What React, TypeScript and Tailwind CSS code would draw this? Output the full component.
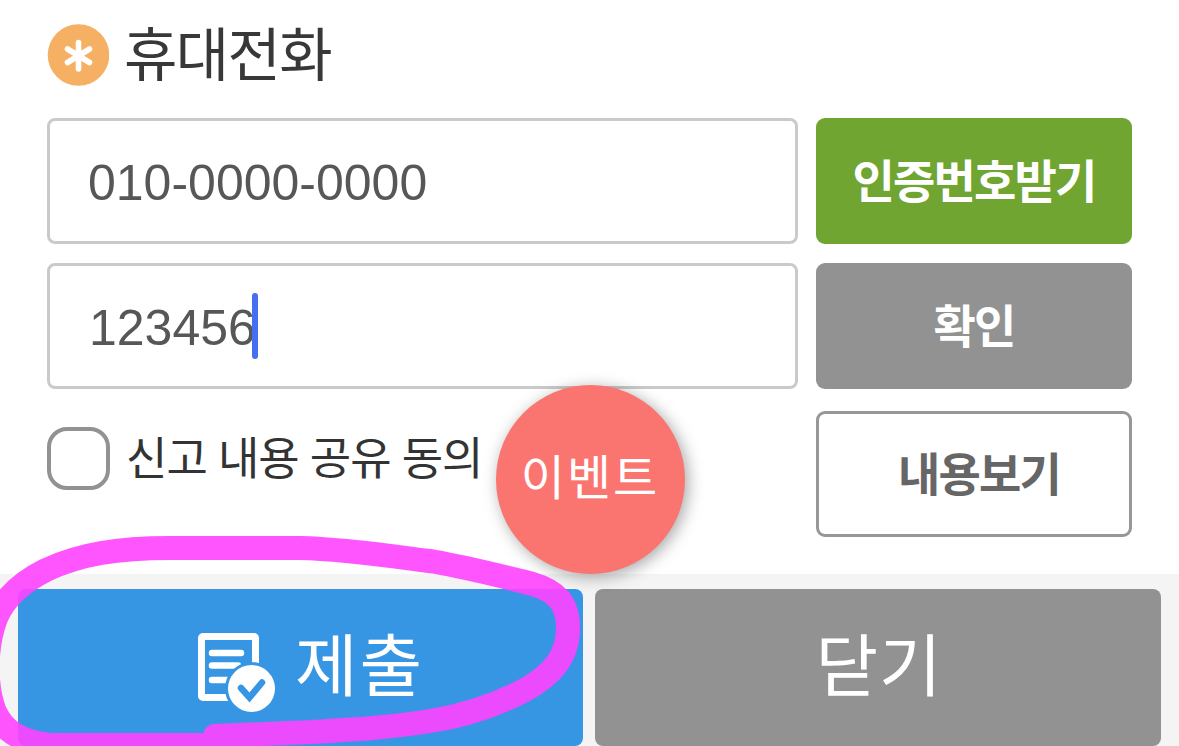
import type { ReactNode } from "react";

function RequiredBadge() {
  return (
    <svg viewBox="0 0 62 62" className="h-[62px] w-[62px] shrink-0" aria-hidden="true">
      <circle cx="31.500" cy="31" r="30.800" fill="#f6b064" />
      <path
        d="M31.500 18.500V45M20.500 25L42.500 38.500M42.500 25L20.500 38.500"
        stroke="#fff"
        strokeWidth="5.600"
        strokeLinecap="round"
      />
    </svg>
  );
}

function SubmitIcon() {
  return (
    <svg viewBox="0 0 80 82" className="h-[82px] w-[80px] shrink-0" fill="none" aria-hidden="true">
      <rect x="4.500" y="5.500" width="54" height="61" rx="1.500" stroke="#fff" strokeWidth="7" />
      <path d="M15 22H44M15 34.500H41M15 49H38" stroke="#fff" strokeWidth="6.500" strokeLinecap="round" />
      <circle cx="54.500" cy="57.500" r="26.500" fill="#3796e3" />
      <circle cx="54.500" cy="57.500" r="23.500" fill="#fff" />
      <path
        d="M44 57L52.500 66.500L65 51.500"
        stroke="#3796e3"
        strokeWidth="6.500"
        strokeLinecap="round"
      />
    </svg>
  );
}

function Marker() {
  return (
    <svg
      viewBox="0 0 1179 746"
      className="pointer-events-none absolute inset-0 h-[746px] w-[1179px]"
      aria-hidden="true"
    >
      <path
        fill="none"
        stroke="#ff43ff"
        strokeOpacity="0.9"
        strokeWidth="24"
        strokeLinecap="round"
        strokeLinejoin="round"
        d="M215 736L300 732.500C345 730 390 728 433 720.500C467 715 496 705 524 690.500C554 674 568 655 568 628C568 603 557 591 531 583.500C505 577 470 568 433 561.500C390 556 345 549 300 548L170 548C118 548 80 554 46 570C22 582 4 599 -4 618C-16 650 -14 690 -5 712C4 732 22 742 50 745L200 745"
      />
    </svg>
  );
}

function Field({ children }: { children: ReactNode }) {
  return (
    <div className="flex h-[126px] w-[751px] items-center rounded-[8px] border-[3px] border-[#cacaca] bg-white pt-[3px] pl-[38px] font-['Liberation_Sans',sans-serif] text-[50px] leading-none text-[#575757]">
      {children}
    </div>
  );
}

export default function App() {
  return (
    <div className="relative flex h-[746px] w-[1179px] flex-col overflow-hidden bg-white font-['Noto_Sans_CJK_KR',sans-serif]">
      <main className="h-[574px] pt-[24px] pr-[47px] pl-[47px]">
        <div className="flex h-[94px] items-start gap-[15px]">
          <RequiredBadge />
          <h1 className="-mt-[4px] text-[58px] leading-[62px] tracking-[-1.600px] text-[#383838]">휴대전화</h1>
        </div>
        <div className="flex justify-between">
          <Field>010-0000-0000</Field>
          <button className="h-[126px] w-[316px] rounded-[9px] bg-[#6fa530] pb-[7px] text-[46px] leading-none font-bold tracking-[-1.800px] text-white">
            인증번호받기
          </button>
        </div>
        <div className="mt-[19px] flex justify-between">
          <Field>
            <span className="ml-[1px]">123456</span>
            <span className="mb-[3px] -ml-[4px] h-[66px] w-[6px] rounded-[3px] bg-[#466ef0]" />
          </Field>
          <button className="h-[126px] w-[316px] rounded-[9px] bg-[#929292] pb-[7px] text-[46px] leading-none font-bold tracking-[-1.800px] text-white">
            확인
          </button>
        </div>
        <div className="mt-[22px] flex justify-between">
          <label className="flex h-[94px] items-center gap-[16px] text-[45px] leading-none tracking-[-1px] text-[#333] [word-spacing:2px]">
            <span className="h-[63px] w-[63px] rounded-[20px] border-[4px] border-[#929292]" />
            <span className="pb-[5px]">신고 내용 공유 동의</span>
          </label>
          <button className="h-[126px] w-[316px] rounded-[9px] border-[3px] border-[#979797] pb-[7px] pl-[10px] text-[46px] leading-none font-bold tracking-[-1.800px] text-[#666]">
            내용보기
          </button>
        </div>
      </main>
      <footer className="flex h-[172px] gap-[12px] bg-[#f4f4f4] pt-[15px] pl-[18px]">
        <button className="flex h-[157px] w-[565px] items-center justify-center gap-[18px] rounded-[8px] bg-[#3796e3] pt-[8px] pl-[20px] text-[68px] leading-none tracking-[2px] text-white">
          <SubmitIcon />
          <span className="pb-[20px]">제출</span>
        </button>
        <button className="h-[157px] w-[566px] rounded-[8px] bg-[#929292] pb-[12px] pl-[2px] text-[68px] leading-none tracking-[1px] text-white">
          닫기
        </button>
      </footer>
      <Marker />
      <div className="absolute top-[385px] left-[496px] flex h-[189px] w-[189px] items-center justify-center rounded-full bg-[#fb7570] pr-[1px] pb-[11px] text-[48px] leading-none tracking-[2px] text-white shadow-[3px_3px_16px_rgba(0,0,0,0.35)]">
        이벤트
      </div>
    </div>
  );
}
